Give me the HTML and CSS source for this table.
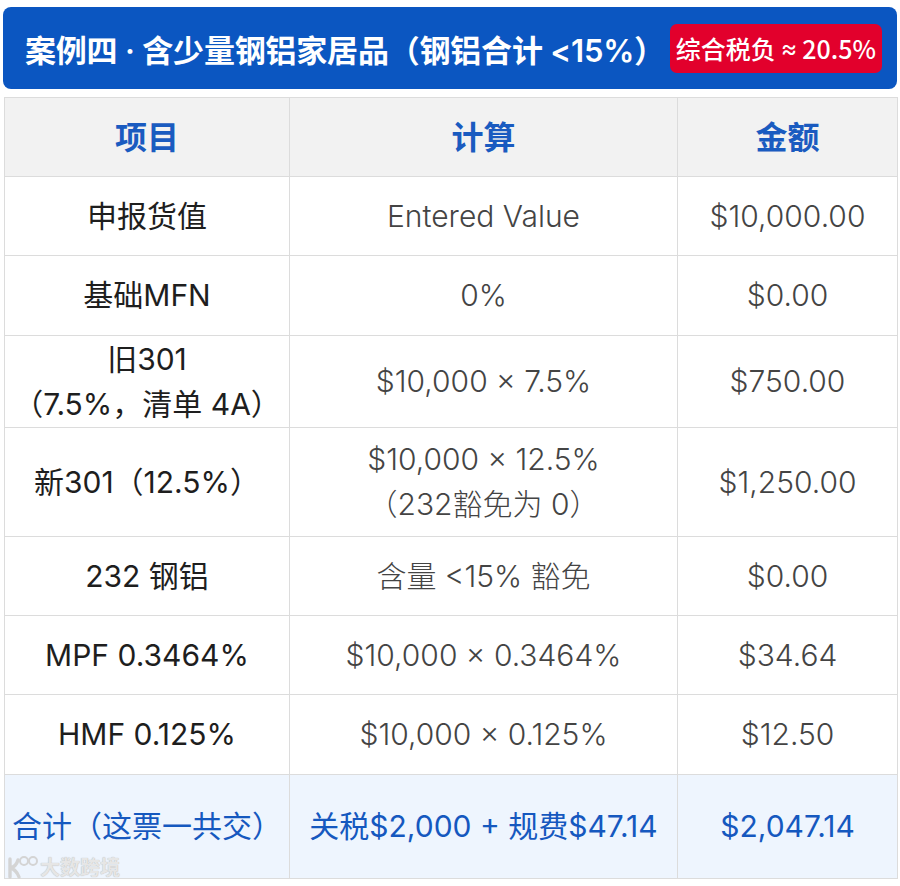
FILE: index.html
```html
<!DOCTYPE html>
<html lang="zh-CN">
<head>
<meta charset="utf-8">
<title>案例四</title>
<link rel="stylesheet" href="styles.css">
</head>
<body>
<div class="page">
  <div class="banner">
    <h1 class="title">案例四 · 含少量钢铝家居品（钢铝合计 &lt;15%）</h1>
    <span class="badge">综合税负 <span class="approx">≈</span> 20.5%</span>
  </div>
  <table class="calc">
    <colgroup>
      <col class="c1"><col class="c2"><col class="c3">
    </colgroup>
    <thead>
      <tr class="r-head"><th>项目</th><th>计算</th><th>金额</th></tr>
    </thead>
    <tbody>
      <tr class="r79"><td class="item">申报货值</td><td>Entered Value</td><td>$10,000.00</td></tr>
      <tr class="r80"><td class="item">基础MFN</td><td>0%</td><td>$0.00</td></tr>
      <tr class="r92"><td class="item">旧301<br>（7.5%，清单 4A）</td><td>$10,000 × 7.5%</td><td>$750.00</td></tr>
      <tr class="r109"><td class="item">新301（12.5%）</td><td>$10,000 × 12.5%<br>（232豁免为 0）</td><td>$1,250.00</td></tr>
      <tr class="r79"><td class="item">232 钢铝</td><td>含量 &lt;15% 豁免</td><td>$0.00</td></tr>
      <tr class="r79"><td class="item">MPF 0.3464%</td><td>$10,000 × 0.3464%</td><td>$34.64</td></tr>
      <tr class="r80"><td class="item">HMF 0.125%</td><td>$10,000 × 0.125%</td><td>$12.50</td></tr>
      <tr class="r-total"><td>合计（这票一共交）</td><td>关税$2,000 + 规费$47.14</td><td>$2,047.14</td></tr>
    </tbody>
  </table>
  <div class="watermark">
    <svg class="wm-logo" width="32" height="26" viewBox="0 0 32 26">
      <path d="M4 5 L4 23 M4 14 Q10 13 12 6 M4 14 Q10 15 13 23" fill="none" stroke="#d4d4d4" stroke-width="3.4" stroke-linecap="round"/>
      <circle cx="18" cy="7" r="4" fill="none" stroke="#d4d4d4" stroke-width="2"/>
      <circle cx="27" cy="7" r="4" fill="none" stroke="#d4d4d4" stroke-width="2"/>
    </svg>
    <span class="wm-text">大数跨境</span>
  </div>
</div>
</body>
</html>
```
FILE: styles.css
```css
html, body {
  margin: 0;
  padding: 0;
  background: #ffffff;
}

body {
  font-family: Inter, "Noto Sans CJK SC", sans-serif;
}

.page {
  position: relative;
  width: 900px;
  height: 886px;
  padding-top: 7px;
  box-sizing: border-box;
}

.banner {
  margin: 0 3px 8px 3px;
  height: 82px;
  background: #0b56c1;
  border-radius: 8px;
  display: flex;
  align-items: center;
  justify-content: space-between;
  padding: 0 15px 0 22px;
  box-sizing: border-box;
}

.title {
  margin: 0;
  color: #ffffff;
  font-size: 31px;
  font-weight: 600;
  letter-spacing: -0.2px;
  white-space: nowrap;
}

.badge {
  height: 49px;
  display: flex;
  align-items: center;
  padding: 0 6px;
  background: #e2002c;
  color: #ffffff;
  border-radius: 7px;
  font-family: "Noto Sans CJK SC", sans-serif;
  font-size: 25px;
  font-weight: 500;
  white-space: nowrap;
  word-spacing: -3px;
}

.approx {
  font-family: Inter, sans-serif;
  font-weight: 400;
  margin: 0 5px;
}

.calc {
  margin-left: 4px;
  width: 893px;
  border-collapse: collapse;
  table-layout: fixed;
}

.c1 { width: 285px; }
.c2 { width: 388px; }
.c3 { width: 220px; }

.calc th,
.calc td {
  border: 1px solid #dcdcdc;
  text-align: center;
  vertical-align: middle;
  padding: 0 4px;
  font-size: 30px;
  line-height: 45px;
  color: #444444;
  font-weight: 300;
}

.calc th {
  background: #f2f2f2;
  color: #1a5bc0;
  font-size: 32px;
  font-weight: 700;
}

.calc td.item {
  color: #1e1e1e;
  font-weight: 400;
}

.r-head { height: 79px; }
.r79 { height: 79px; }
.r80 { height: 80px; }
.r92 { height: 92px; }
.r109 { height: 109px; }

.r-total { height: 104px; }

.r-total td {
  background: #eef5fe;
  color: #1558bf;
  font-size: 30px;
  font-weight: 400;
  padding: 0 2px;
  white-space: nowrap;
}

.watermark {
  position: absolute;
  left: 6px;
  top: 852px;
  display: flex;
  align-items: center;
  gap: 2px;
}

.wm-text {
  font-size: 20px;
  color: #e6e6e6;
  font-weight: 700;
  text-shadow: 0 0 1px #aaaaaa;
  font-family: "Noto Sans CJK SC", sans-serif;
}
```
